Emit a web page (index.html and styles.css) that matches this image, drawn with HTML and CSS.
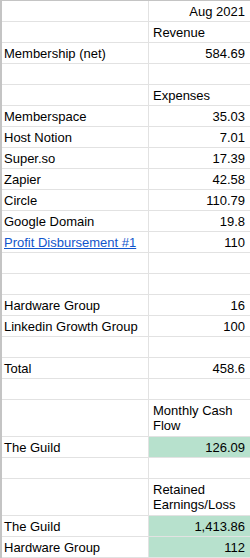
FILE: index.html
```html
<!DOCTYPE html>
<html>
<head>
<meta charset="utf-8">
<link rel="stylesheet" href="styles.css">
</head>
<body>
<div class="sheet">
  <div class="c l"></div><div class="c r num">Aug 2021</div>
  <div class="c l"></div><div class="c r">Revenue</div>
  <div class="c l">Membership (net)</div><div class="c r num">584.69</div>
  <div class="c l"></div><div class="c r"></div>
  <div class="c l"></div><div class="c r">Expenses</div>
  <div class="c l">Memberspace</div><div class="c r num">35.03</div>
  <div class="c l">Host Notion</div><div class="c r num">7.01</div>
  <div class="c l">Super.so</div><div class="c r num">17.39</div>
  <div class="c l">Zapier</div><div class="c r num">42.58</div>
  <div class="c l">Circle</div><div class="c r num">110.79</div>
  <div class="c l">Google Domain</div><div class="c r num">19.8</div>
  <div class="c l"><a class="link" href="#">Profit Disbursement #1</a></div><div class="c r num">110</div>
  <div class="c l"></div><div class="c r"></div>
  <div class="c l"></div><div class="c r"></div>
  <div class="c l">Hardware Group</div><div class="c r num">16</div>
  <div class="c l">Linkedin Growth Group</div><div class="c r num">100</div>
  <div class="c l"></div><div class="c r"></div>
  <div class="c l">Total</div><div class="c r num">458.6</div>
  <div class="c l"></div><div class="c r"></div>
  <div class="c l tall"></div><div class="c r tall">Monthly Cash Flow</div>
  <div class="c l">The Guild</div><div class="c r num green">126.09</div>
  <div class="c l"></div><div class="c r"></div>
  <div class="c l tall"></div><div class="c r tall">Retained Earnings/Loss</div>
  <div class="c l">The Guild</div><div class="c r num green">1,413.86</div>
  <div class="c l">Hardware Group</div><div class="c r num green">112</div>
</div>
</body>
</html>
```
FILE: styles.css
```css
html, body {
  margin: 0;
  padding: 0;
  background: #ffffff;
}
body {
  width: 250px;
  overflow: hidden;
}
.sheet {
  display: grid;
  grid-template-columns: 147px 1fr;
  border-left: 2px solid #c4c4c4;
  border-top: 1px solid #c4c4c4;
  font-family: "Liberation Sans", Arial, sans-serif;
  font-size: 13px;
  color: #000;
  width: 248px;
}
.c {
  box-sizing: border-box;
  height: 21px;
  border-bottom: 1px solid #e2e2e2;
  display: flex;
  align-items: flex-end;
  padding: 0 4px 2px 2px;
  line-height: 15px;
  white-space: nowrap;
  overflow: hidden;
}
.l {
  border-right: 1px solid #e2e2e2;
}
.r {
  padding-left: 4px;
  padding-right: 5px;
}
.num {
  justify-content: flex-end;
}
.tall {
  height: 37px;
  white-space: normal;
  padding-bottom: 3px;
}
.green {
  background: #b7e1cd;
}
.link {
  color: #1155cc;
  text-decoration: underline;
}
```
